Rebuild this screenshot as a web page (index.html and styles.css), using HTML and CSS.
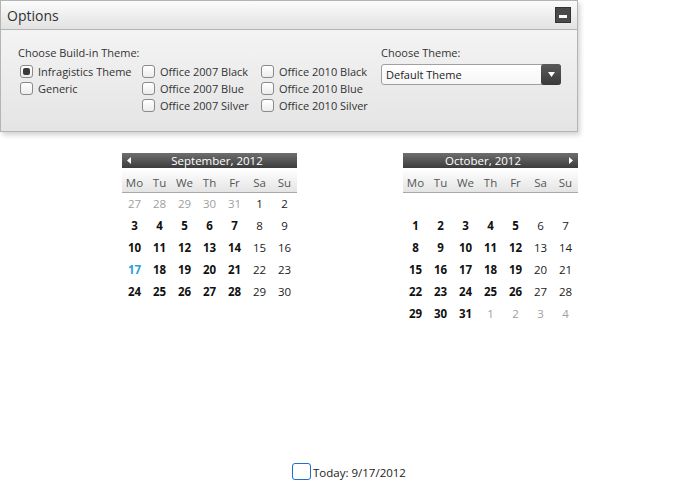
FILE: index.html
```html
<!DOCTYPE html>
<html>
<head>
<meta charset="utf-8">
<link rel="stylesheet" href="styles.css">
</head>
<body>
<div class="page">
  <section class="panel">
    <header class="panel-head">
      <span class="panel-title">Options</span>
      <button class="min-btn" aria-label="Minimize"><span></span></button>
    </header>
    <div class="panel-body">
      <div class="themes">
        <div class="label">Choose Build-in Theme:</div>
        <div class="theme-grid">
          <label class="opt"><span class="box checked"></span>Infragistics Theme</label>
          <label class="opt"><span class="box"></span>Office 2007 Black</label>
          <label class="opt"><span class="box"></span>Office 2010 Black</label>
          <label class="opt"><span class="box"></span>Generic</label>
          <label class="opt"><span class="box"></span>Office 2007 Blue</label>
          <label class="opt"><span class="box"></span>Office 2010 Blue</label>
          <span></span>
          <label class="opt"><span class="box"></span>Office 2007 Silver</label>
          <label class="opt"><span class="box"></span>Office 2010 Silver</label>
        </div>
      </div>
      <div class="combo-wrap">
        <div class="label">Choose Theme:</div>
        <div class="combo">
          <span class="combo-text">Default Theme</span>
          <span class="combo-btn"><svg width="7" height="5" viewBox="0 0 7 5"><path d="M0 0H7L3.5 5Z" fill="#fff"/></svg></span>
        </div>
      </div>
    </div>
  </section>

  <div class="calendars">
    <div class="cal">
      <div class="cal-head prev">
        <svg class="arrow left" width="4" height="7" viewBox="0 0 4 7"><path d="M4 0V7L0 3.5Z" fill="#fff"/></svg>
        September, 2012
      </div>
      <div class="dow"><span>Mo</span><span>Tu</span><span>We</span><span>Th</span><span>Fr</span><span>Sa</span><span>Su</span></div>
      <div class="days">
        <span class="o">27</span><span class="o">28</span><span class="o">29</span><span class="o">30</span><span class="o">31</span><span class="w">1</span><span class="w">2</span>
        <span>3</span><span>4</span><span>5</span><span>6</span><span>7</span><span class="w">8</span><span class="w">9</span>
        <span>10</span><span>11</span><span>12</span><span>13</span><span>14</span><span class="w">15</span><span class="w">16</span>
        <span class="today">17</span><span>18</span><span>19</span><span>20</span><span>21</span><span class="w">22</span><span class="w">23</span>
        <span>24</span><span>25</span><span>26</span><span>27</span><span>28</span><span class="w">29</span><span class="w">30</span>
      </div>
    </div>
    <div class="cal">
      <div class="cal-head next">
        October, 2012
        <svg class="arrow right" width="4" height="7" viewBox="0 0 4 7"><path d="M0 0V7L4 3.5Z" fill="#fff"/></svg>
      </div>
      <div class="dow"><span>Mo</span><span>Tu</span><span>We</span><span>Th</span><span>Fr</span><span>Sa</span><span>Su</span></div>
      <div class="days">
        <span></span><span></span><span></span><span></span><span></span><span></span><span></span>
        <span>1</span><span>2</span><span>3</span><span>4</span><span>5</span><span class="w">6</span><span class="w">7</span>
        <span>8</span><span>9</span><span>10</span><span>11</span><span>12</span><span class="w">13</span><span class="w">14</span>
        <span>15</span><span>16</span><span>17</span><span>18</span><span>19</span><span class="w">20</span><span class="w">21</span>
        <span>22</span><span>23</span><span>24</span><span>25</span><span>26</span><span class="w">27</span><span class="w">28</span>
        <span>29</span><span>30</span><span>31</span><span class="o">1</span><span class="o">2</span><span class="o">3</span><span class="o">4</span>
      </div>
    </div>
  </div>

  <div class="today-row">
    <span class="today-box"></span><span class="today-text">Today: 9/17/2012</span>
  </div>
</div>
</body>
</html>
```

FILE: styles.css
```css
html, body {
  margin: 0;
  padding: 0;
  background: #fff;
}
body {
  font-family: "Open Sans", "Noto Sans", sans-serif;
  font-size: 11px;
  color: #222;
}
.page {
  width: 700px;
  height: 499px;
  display: flex;
  flex-direction: column;
}
.panel {
  width: 576px;
  height: 130px;
  border: 1px solid #b4b4b4;
  background: linear-gradient(#f8f8f8, #e4e4e4);
  box-shadow: 2px 3px 5px rgba(0,0,0,0.18);
  display: flex;
  flex-direction: column;
  flex: none;
}
.panel-head {
  height: 28px;
  border-bottom: 1px solid #b4b4b4;
  background: linear-gradient(#fbfbfb, #e2e2e2);
  display: flex;
  align-items: center;
  justify-content: space-between;
  padding: 0 6px 0 6px;
}
.panel-title {
  font-size: 14px;
  color: #333;
}
.min-btn {
  width: 16px;
  height: 16px;
  padding: 0;
  border: 1px solid #333;
  background: #4a4a4a;
  display: flex;
  align-items: flex-end;
  justify-content: center;
  padding-bottom: 4px;
  box-sizing: border-box;
}
.min-btn span {
  width: 8px;
  height: 3px;
  background: #fff;
}
.panel-body {
  display: flex;
  padding: 15px 0 0 17px;
}
.label {
  color: #333;
  height: 15px;
  line-height: 15px;
  margin-bottom: 4px;
}
.theme-grid {
  display: grid;
  grid-template-columns: 122px 119px 120px;
  grid-auto-rows: 17px;
  padding-left: 2px;
  margin-top: -1px;
}
.opt {
  display: flex;
  align-items: center;
  gap: 5px;
  color: #333;
  white-space: nowrap;
}
.box {
  width: 11px;
  height: 11px;
  border: 1px solid #8a8a8a;
  border-radius: 3px;
  background: linear-gradient(#fff, #ececec);
  display: flex;
  align-items: center;
  justify-content: center;
  flex: none;
}
.box.checked::after {
  content: "";
  width: 7px;
  height: 7px;
  border-radius: 2px;
  background: #3a3a3a;
}
.combo {
  width: 178px;
  height: 19px;
  border: 1px solid #a0a0a0;
  border-radius: 3px;
  background: linear-gradient(#fff, #f6f6f6);
  display: flex;
  align-items: center;
  justify-content: space-between;
  margin-top: 1px;
}
.combo-text {
  padding-left: 4px;
  color: #222;
}
.combo-btn {
  width: 20px;
  height: 21px;
  margin-right: -1px;
  background: linear-gradient(#5a5a5a, #3a3a3a);
  border-radius: 3px;
  display: flex;
  align-items: center;
  justify-content: center;
}
.calendars {
  display: flex;
  justify-content: center;
  gap: 106px;
  margin-top: 21px;
}
.cal {
  width: 175px;
}
.cal-head {
  height: 15px;
  background: linear-gradient(#6e6e6e, #3c3c3c);
  color: #fff;
  text-align: center;
  line-height: 15px;
  font-size: 11.5px;
  position: relative;
}
.cal-head.prev { padding-left: 15px; }
.cal-head.next { padding-right: 15px; }
.arrow {
  position: absolute;
  top: 4px;
}
.arrow.left { left: 5px; }
.arrow.right { right: 5px; }
.dow {
  display: grid;
  grid-template-columns: repeat(7, 25px);
  height: 23px;
  margin-top: 1px;
  background: linear-gradient(#fff, #e4e4e4);
  border-bottom: 1px solid #a8a8a8;
}
.dow span {
  text-align: center;
  line-height: 28px;
  color: #555;
  font-size: 11.5px;
}
.days {
  display: grid;
  grid-template-columns: repeat(7, 25px);
  grid-auto-rows: 22px;
}
.days span {
  text-align: center;
  line-height: 22px;
  font-weight: 700;
  color: #111;
  font-size: 11.5px;
}
.days span.w {
  font-weight: 400;
  color: #222;
}
.days span.o {
  font-weight: 400;
  color: #a0a0a0;
}
.days span.today {
  color: #2b9fdc;
}
.today-row {
  margin-top: auto;
  margin-bottom: 19px;
  display: flex;
  justify-content: center;
  align-items: flex-end;
  padding-right: 2px;
}
.today-box {
  width: 17px;
  height: 15px;
  border: 1px solid #1f6fd1;
  border-radius: 3px;
}
.today-text {
  font-size: 11.5px;
  color: #222;
  line-height: 14px;
  margin-left: 2px;
}
```
